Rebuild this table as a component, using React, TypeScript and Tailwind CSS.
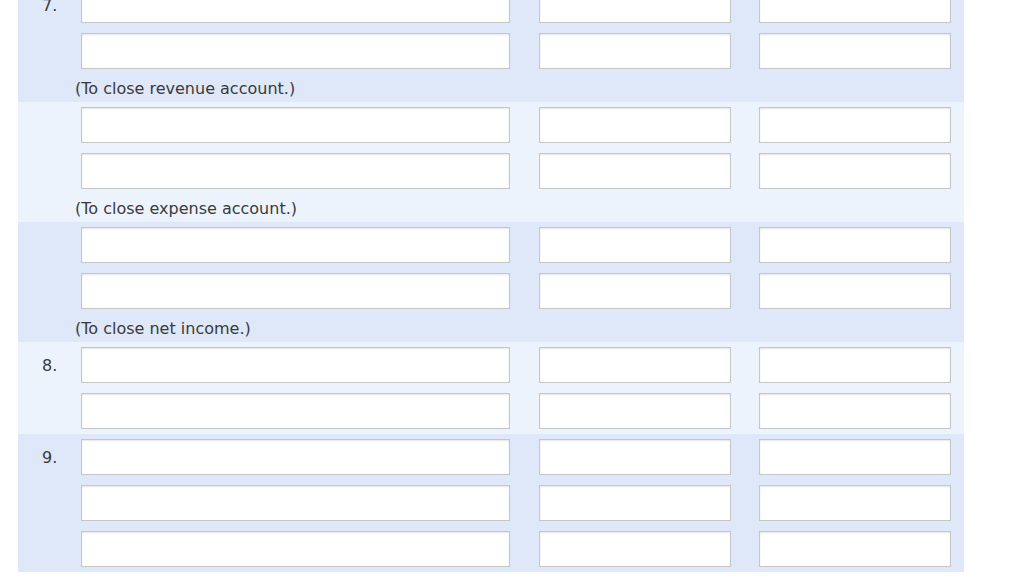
import React from 'react';

type Band = {
  num?: string;
  rows: number;
  note?: string;
  dark: boolean;
};

const bands: Band[] = [
  { num: '7.', rows: 2, note: '(To close revenue account.)', dark: true },
  { rows: 2, note: '(To close expense account.)', dark: false },
  { rows: 2, note: '(To close net income.)', dark: true },
  { num: '8.', rows: 2, dark: false },
  { num: '9.', rows: 3, dark: true },
];

function Field({ className }: { className: string }) {
  return (
    <input
      type="text"
      className={`h-[36px] bg-white border border-[#c6c6c6] shadow-[inset_0_1px_2px_rgba(0,0,0,0.1)] outline-none ${className}`}
    />
  );
}

export default function App() {
  return (
    <div
      className="min-h-screen bg-white text-[#3a3a3a] -mt-[18px]"
      style={{ fontFamily: '"DejaVu Sans", Verdana, sans-serif' }}
    >
      <div className="ml-[18px] w-[946px]">
        {bands.map((band, b) => (
          <div key={b} className={band.dark ? 'bg-[#dee8f8]' : 'bg-[#edf3fd]'}>
            {Array.from({ length: band.rows }).map((_, r) => (
              <div key={r} className="flex items-center h-[46px]">
                <div className="w-[63px] pl-[24px] pt-[2px] text-[16px]">{r === 0 ? band.num : ''}</div>
                <Field className="w-[429px]" />
                <Field className="ml-[29px] w-[192px]" />
                <Field className="ml-[28px] w-[192px]" />
              </div>
            ))}
            {band.note && (
              <div className="h-[28px] flex items-center pl-[57px] pt-[1px] text-[16px]">{band.note}</div>
            )}
          </div>
        ))}
      </div>
    </div>
  );
}
